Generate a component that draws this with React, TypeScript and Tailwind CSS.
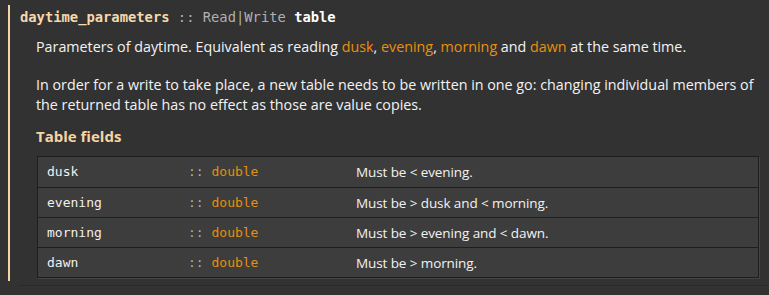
const FIELDS = [
  { name: "dusk", desc: "Must be < evening." },
  { name: "evening", desc: "Must be > dusk and < morning." },
  { name: "morning", desc: "Must be > evening and < dawn." },
  { name: "dawn", desc: "Must be > morning." },
];

const mono = "font-['DejaVu_Sans_Mono',monospace]";

export default function App() {
  return (
    <div className="w-[769px] h-[295px] overflow-hidden bg-[#323232] text-[#f2f2f2] font-['Open_Sans',sans-serif]">
      <div className="pt-[5px] pl-2 pr-[10px]">
        <div className="border-l-2 border-[#f5d5a5] pl-[10px] pb-[3px]">
          <div className={`${mono} text-[13.8px] leading-[22px] pt-[1px]`}>
            <span className="font-bold text-[#f5d9ad]">daytime_parameters</span>
            <span className="text-[#b0b0b0]"> :: Read|Write </span>
            <span className="font-bold text-white">table</span>
          </div>
          <div className="pl-4 text-[14.3px] leading-[20px]">
            <p className="mt-[9px]">
              Parameters of daytime. Equivalent as reading <span className="text-[#e8900c]">dusk</span>,{" "}
              <span className="text-[#e8900c]">evening</span>, <span className="text-[#e8900c]">morning</span> and{" "}
              <span className="text-[#e8900c]">dawn</span> at the same time.
            </p>
            <p className="mt-[18px]">
              In order for a write to take place, a new table needs to be written in one go: changing individual members of
              the returned table has no effect as those are value copies.
            </p>
            <h4 className="mt-[11px] text-[15px] font-bold text-[#f5d5a5] leading-[20px]">Table fields</h4>
            <div className="mt-[10px] ml-px border border-[#1e1e1e] bg-[#3d3d3d] shadow-[1px_1px_0_#454545]">
              {FIELDS.map((f, i) => (
                <div
                  key={f.name}
                  className={`flex items-center h-[30px] ${i > 0 ? "border-t border-[#1e1e1e]" : ""}`}
                >
                  <span className={`${mono} text-[13px] w-[150px] pl-[9px] text-[#f0f0f0]`}>{f.name}</span>
                  <span className={`${mono} text-[13px] w-[168px]`}>
                    <span className="text-[#b0b0b0]">:: </span>
                    <span className="text-[#e3900f]">double</span>
                  </span>
                  <span className="text-[13.5px] tracking-[-0.1px]">{f.desc}</span>
                </div>
              ))}
            </div>
          </div>
        </div>
      </div>
      <div className="mt-[4px] ml-[18px] border-t border-[#2a2a2a]" />
    </div>
  );
}
